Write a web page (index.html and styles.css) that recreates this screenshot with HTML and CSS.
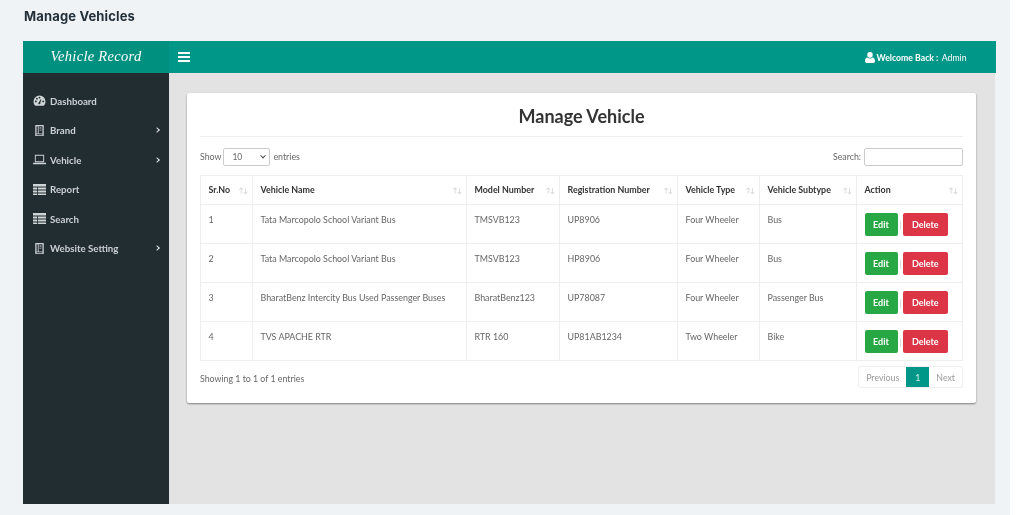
FILE: index.html
```html
<!DOCTYPE html>
<html lang="en">
<head>
<meta charset="utf-8">
<title>Manage Vehicles</title>
<link rel="stylesheet" href="styles.css">
</head>
<body>
<svg class="defs" width="0" height="0" aria-hidden="true">
  <symbol id="i-gauge" viewBox="0 0 14 12"><path fill-rule="evenodd" d="M7 .5A6.5 6.5 0 0 0 .5 7c0 1.700.6 3.200 1.600 4.400.2.2.4.3.7.3h8.400c.3 0 .5-.1.7-.3 1-1.200 1.600-2.700 1.600-4.400A6.500 6.500 0 0 0 7 .5zM3 8a1 1 0 1 1 0-2 1 1 0 0 1 0 2zm1.200-3a1 1 0 1 1 0-2 1 1 0 0 1 0 2zM7 3.800a1 1 0 1 1 0-2 1 1 0 0 1 0 2zm1 5.200a1.200 1.200 0 0 1-2.300.3c-.1-.6.2-1.100.7-1.300l1.900-3.400.7.3-1.100 3.500c.1.2.1.4.1.6zM11 8a1 1 0 1 1 0-2 1 1 0 0 1 0 2z"/></symbol>
  <symbol id="i-book" viewBox="0 0 11 13"><path fill-rule="evenodd" d="M.5 0h10v13h-10zM2 1.500V10h1.500V1.500zM4.500 1.500V10h4.500V1.500zM2 11v1h7v-1z"/><path d="M5.500 3h2.500v1H5.500zM5.500 5.500h2.500v1H5.500z"/></symbol>
  <symbol id="i-laptop" viewBox="0 0 14 10"><path fill-rule="evenodd" d="M2 0h10v8H2zm1 1v6h8V1zM0 8.500h14V10H0z"/></symbol>
  <symbol id="i-table" viewBox="0 0 13 11"><path d="M0 0h13v2.600H0zM0 3.400h4.200v2.200H0zM5 3.400h8v2.200H5zM0 6.400h4.200v2.200H0zM5 6.400h8v2.200H5zM0 9.400h4.200V11H0zM5 9.400h8V11H5z"/></symbol>
  <symbol id="i-user" viewBox="0 0 11 12"><path d="M5.500 0a3 3 0 0 1 3 3.200 3 3 0 0 1-6 0 3 3 0 0 1 3-3.200zM2.800 6c.7.6 1.700 1 2.700 1s2-.4 2.700-1c1.700.2 2.800 1.700 2.800 3.800 0 1.300-.8 2.200-2 2.200H2C.8 12 0 11.100 0 9.800 0 7.700 1.100 6.200 2.800 6z"/></symbol>
</svg>
<div class="sheet">
<h1 class="page-title">Manage Vehicles</h1>
<div class="app">
  <header class="brand">Vehicle Record</header>
  <header class="topbar">
    <span class="burger"><i></i><i></i><i></i></span>
    <span class="welcome"><svg class="user-icon"><use href="#i-user"/></svg><b>Welcome Back :</b> Admin</span>
  </header>
  <nav class="sidebar">
    <a class="nav-item"><svg class="nav-icon"><use href="#i-gauge"/></svg>Dashboard</a>
    <a class="nav-item"><svg class="nav-icon"><use href="#i-book"/></svg>Brand<span class="chev"></span></a>
    <a class="nav-item"><svg class="nav-icon"><use href="#i-laptop"/></svg>Vehicle<span class="chev"></span></a>
    <a class="nav-item"><svg class="nav-icon"><use href="#i-table"/></svg>Report</a>
    <a class="nav-item"><svg class="nav-icon"><use href="#i-table"/></svg>Search</a>
    <a class="nav-item"><svg class="nav-icon"><use href="#i-book"/></svg>Website Setting<span class="chev"></span></a>
  </nav>
  <main class="content">
    <section class="card">
      <h2 class="card-title">Manage Vehicle</h2>
      <div class="controls">
        <label class="length">Show <span class="select">10<span class="select-arrow"></span></span> entries</label>
        <label class="search">Search: <span class="search-input"></span></label>
      </div>
      <table class="grid">
        <thead>
          <tr>
            <th class="c1">Sr.No<span class="sort">↑↓</span></th>
            <th class="c2">Vehicle Name<span class="sort">↑↓</span></th>
            <th class="c3">Model Number<span class="sort">↑↓</span></th>
            <th class="c4">Registration Number<span class="sort">↑↓</span></th>
            <th class="c5">Vehicle Type<span class="sort">↑↓</span></th>
            <th class="c6">Vehicle Subtype<span class="sort">↑↓</span></th>
            <th class="c7">Action<span class="sort">↑↓</span></th>
          </tr>
        </thead>
        <tbody>
          <tr>
            <td>1</td><td>Tata Marcopolo School Variant Bus</td><td>TMSVB123</td><td>UP8906</td><td>Four Wheeler</td><td>Bus</td>
            <td class="actions"><a class="btn edit">Edit</a><span class="sep">|</span><a class="btn del">Delete</a></td>
          </tr>
          <tr>
            <td>2</td><td>Tata Marcopolo School Variant Bus</td><td>TMSVB123</td><td>HP8906</td><td>Four Wheeler</td><td>Bus</td>
            <td class="actions"><a class="btn edit">Edit</a><span class="sep">|</span><a class="btn del">Delete</a></td>
          </tr>
          <tr>
            <td>3</td><td>BharatBenz Intercity Bus Used Passenger Buses</td><td>BharatBenz123</td><td>UP78087</td><td>Four Wheeler</td><td>Passenger Bus</td>
            <td class="actions"><a class="btn edit">Edit</a><span class="sep">|</span><a class="btn del">Delete</a></td>
          </tr>
          <tr>
            <td>4</td><td>TVS APACHE RTR</td><td>RTR 160</td><td>UP81AB1234</td><td>Two Wheeler</td><td>Bike</td>
            <td class="actions"><a class="btn edit">Edit</a><span class="sep">|</span><a class="btn del">Delete</a></td>
          </tr>
        </tbody>
      </table>
      <div class="foot">
        <span class="info">Showing 1 to 1 of 1 entries</span>
        <span class="pager"><a class="pg">Previous</a><a class="pg current">1</a><a class="pg">Next</a></span>
      </div>
    </section>
  </main>
</div>
</div>
</body>
</html>
```

FILE: styles.css
```css
* { box-sizing: border-box; }
html { background: #fff; }
body {
  margin: 0;
  width: 1024px;
  height: 515px;
  overflow: hidden;
  font-family: Lato, "Liberation Sans", sans-serif;
  font-size: 9px;
  color: #666;
}
.sheet {
  width: 1010px;
  height: 515px;
  padding: 0 15px 11px 23px;
  background: #eff3f6;
  display: flex;
  flex-direction: column;
  filter: blur(.35px);
}
.defs { position: absolute; }
.page-title {
  margin: 0 0 0 1px;
  height: 41px;
  padding-top: 9px;
  font: 700 13px/15px Inter, sans-serif;
  letter-spacing: .15px;
  color: #23303a;
}
.app {
  flex: 1;
  display: grid;
  grid-template-columns: 146px 1fr;
  grid-template-rows: 32px 1fr;
  background: #e3e3e3;
}
.brand {
  background: #00907f;
  color: #fff;
  font: italic 14.500px/31px "Liberation Serif", serif;
  letter-spacing: .3px;
  text-align: center;
}
.topbar {
  background: #009688;
  color: #fff;
  display: flex;
  align-items: center;
  justify-content: space-between;
  padding: 0 29.500px 0 9px;
}
.burger { display: flex; flex-direction: column; gap: 2px; width: 12px; }
.burger i { display: block; height: 2px; background: #fff; }
.welcome { display: flex; align-items: center; font-size: 8.700px; gap: 1.500px; white-space: pre; }
.welcome b { font-weight: 700; }
.user-icon { width: 10px; height: 11px; fill: #fff; }
.sidebar {
  background: #222d32;
  padding-top: 13px;
  display: flex;
  flex-direction: column;
}
.nav-item {
  height: 29.500px;
  display: flex;
  align-items: center;
  padding: 0 10px;
  color: #ccd1d4;
  font-size: 9.700px;
  font-weight: 700;
}
.nav-icon { width: 13px; height: 11px; fill: #cfd4d6; margin-right: 4px; flex: none; }
.chev {
  margin-left: auto;
  width: 4px;
  height: 4px;
  border-top: 1px solid #dfe3e5;
  border-right: 1px solid #dfe3e5;
  transform: rotate(45deg);
}
.content { padding: 20px 20px 0 18px; }
.card {
  background: #fff;
  height: 310px;
  border-radius: 2px;
  padding: 0 13px;
  box-shadow: 0 1px 2px rgba(0,0,0,.45);
}
.card-title {
  margin: 0;
  height: 44px;
  border-bottom: 1px solid #eee;
  font-size: 18px;
  font-weight: 700;
  line-height: 47px;
  text-align: center;
  color: #333;
}
.controls {
  display: flex;
  justify-content: space-between;
  align-items: center;
  height: 38px;
  padding-top: 1px;
  font-size: 8.800px;
}
.length, .search { display: flex; align-items: center; }
.select {
  width: 47px;
  height: 18px;
  margin: 0 3px 0 2px;
  padding: 0 4px 0 8px;
  border: 1px solid #ccc;
  border-radius: 2px;
  display: flex;
  align-items: center;
  justify-content: space-between;
  font-size: 8.500px;
}
.select-arrow {
  width: 4px;
  height: 4px;
  border-right: 1.200px solid #444;
  border-bottom: 1.200px solid #444;
  transform: rotate(45deg) translate(-1px,-1px);
}
.search-input {
  display: block;
  width: 99px;
  height: 18px;
  margin-left: 3px;
  border: 1px solid #ccc;
  border-radius: 2px;
}
.grid {
  width: 762px;
  table-layout: fixed;
  border-collapse: collapse;
  font-size: 8.900px;
}
.grid th, .grid td { border: 1px solid #eee; vertical-align: top; text-align: left; }
.grid th {
  height: 29px;
  padding: 8px 8px 0 7.500px;
  color: #333;
  font-weight: 700;
  position: relative;
}
.grid td { height: 39px; padding: 9px 8px 0 7.500px; }
.grid .actions { padding-top: 8px; }
.sort {
  position: absolute;
  right: 5px;
  top: 10px;
  font-size: 7px;
  font-weight: 400;
  letter-spacing: -1px;
  color: #ccc;
}
.c1 { width: 52px; }
.c2 { width: 214px; }
.c3 { width: 93px; }
.c4 { width: 118px; }
.c5 { width: 82px; }
.c6 { width: 97px; }
.c7 { width: 106px; }
.btn {
  display: inline-block;
  height: 23px;
  line-height: 23px;
  text-align: center;
  color: #fff;
  font-weight: 700;
  font-size: 9px;
  border-radius: 2px;
}
.edit { width: 33px; background: #28a745; }
.del { width: 44.500px; background: #dc3545; }
.sep { display: inline-block; width: 5.500px; text-align: center; color: #ccc; line-height: 23px; vertical-align: top; }
.foot {
  display: flex;
  justify-content: space-between;
  align-items: center;
  padding-top: 5px;
  font-size: 8.800px;
}
.info { padding-top: 2px; }
.pager {
  display: flex;
  height: 22px;
  border: 1px solid #f0f0f0;
  border-radius: 2px;
  color: #999;
  font-size: 8.800px;
}
.pg { display: flex; align-items: center; padding: 0 7px; }
.current { width: 23px; background: #009688; color: #d8f0ec; justify-content: center; padding: 0; }
```
